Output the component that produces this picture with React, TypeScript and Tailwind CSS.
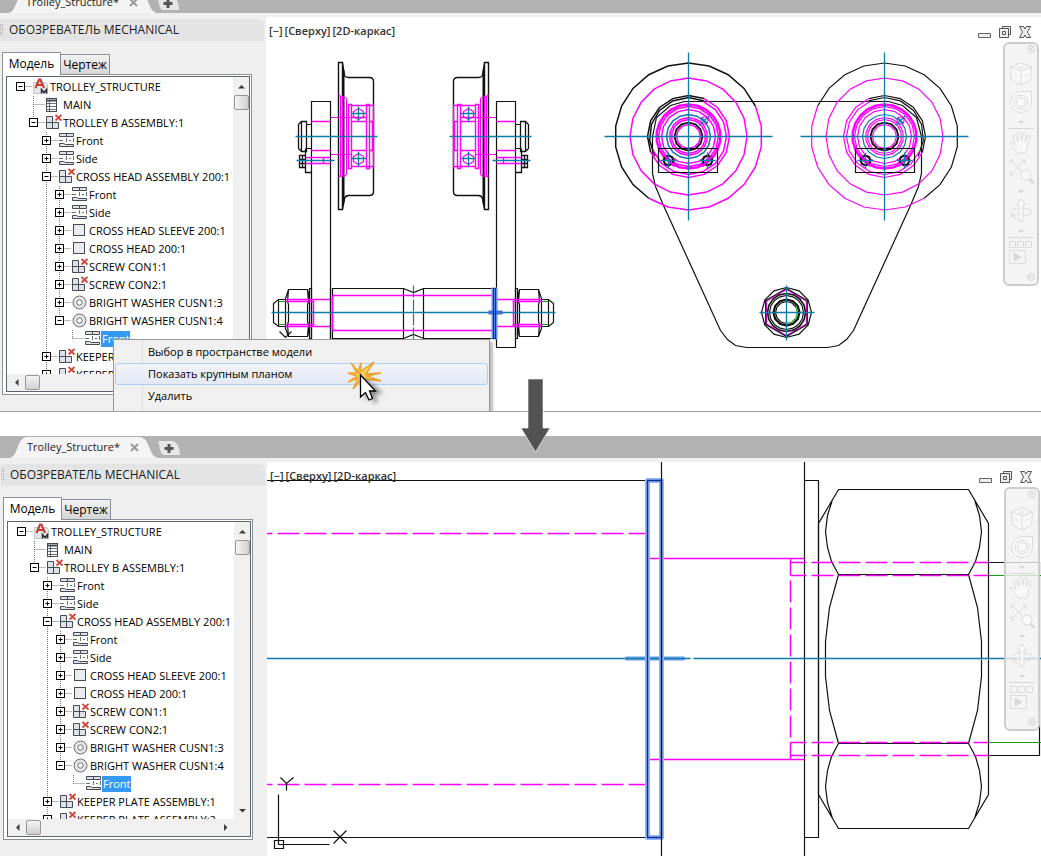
import clsx from "clsx";
import { ReactNode } from "react";

type IconName = "drawing" | "sheet" | "assembly" | "view" | "part" | "washer";

interface TreeNode {
	label: string;
	icon: IconName;
	depth: number;
	state?: "open" | "closed";
	// depths whose dotted line runs through the whole row
	through?: number[];
	// the row's own line stops at its middle
	last?: boolean;
	selected?: boolean;
}

const BLACK = "#111";
const MAGENTA = "#ff00ff";
const CYAN = "#0e7aa8";
const GREEN = "#12a012";
const INK = "#454a55";

const nodes: TreeNode[] = [
	{ label: "TROLLEY_STRUCTURE", icon: "drawing", depth: 0, state: "open" },
	{ label: "MAIN", icon: "sheet", depth: 1 },
	{ label: "TROLLEY B ASSEMBLY:1", icon: "assembly", depth: 1, state: "open", last: true },
	{ label: "Front", icon: "view", depth: 2, state: "closed" },
	{ label: "Side", icon: "view", depth: 2, state: "closed" },
	{ label: "CROSS HEAD ASSEMBLY 200:1", icon: "assembly", depth: 2, state: "open" },
	{ label: "Front", icon: "view", depth: 3, state: "closed", through: [2] },
	{ label: "Side", icon: "view", depth: 3, state: "closed", through: [2] },
	{ label: "CROSS HEAD SLEEVE 200:1", icon: "part", depth: 3, state: "closed", through: [2] },
	{ label: "CROSS HEAD 200:1", icon: "part", depth: 3, state: "closed", through: [2] },
	{ label: "SCREW CON1:1", icon: "assembly", depth: 3, state: "closed", through: [2] },
	{ label: "SCREW CON2:1", icon: "assembly", depth: 3, state: "closed", through: [2] },
	{ label: "BRIGHT WASHER CUSN1:3", icon: "washer", depth: 3, state: "closed", through: [2] },
	{ label: "BRIGHT WASHER CUSN1:4", icon: "washer", depth: 3, state: "open", through: [2], last: true },
	{ label: "Front", icon: "view", depth: 4, through: [2], last: true, selected: true },
	{ label: "KEEPER PLATE ASSEMBLY:1", icon: "assembly", depth: 2, state: "closed" },
	{ label: "KEEPER PLATE ASSEMBLY:2", icon: "assembly", depth: 2, state: "closed" },
];

function NodeIcon({ name }: { name: IconName }) {
	return (
		<svg width="16" height="18" viewBox="0 0 16 18" className="shrink-0" fill="none" stroke={INK}>
			{name === "drawing" && (
				<>
					<path d="M.5 4.500h12l2 2v9H.5z" fill="#e4e6ea" stroke="#c3c6cc" />
					<path d="M2.500 10 6 1.500h1.500L11 10M4 7h6" stroke="#c43a2f" strokeWidth="2" />
					<path d="M8.500 15.500v-4l2.500 3 2.500-3v4" stroke="#2b2f36" strokeWidth="1.500" />
				</>
			)}
			{name === "sheet" && (
				<>
					<rect x=".5" y="2.500" width="10" height="13" fill="#fff" />
					<path d="M1 4.500h9" strokeWidth="2" />
					<path d="M1 7.500h9M1 10.500h9M1 13.500h9M3.500 4v11" strokeWidth=".8" />
				</>
			)}
			{name === "assembly" && (
				<>
					<path d="M.5 2.500h6v6h-6zM.5 8.500h6v6h-6zM6.500 8.500h6v6h-6z" fill="#dfe2e8" />
					<path d="m9.500 1 6 5.500M15.500 1l-6 5.500" stroke="#d5453a" strokeWidth="1.800" />
				</>
			)}
			{name === "view" && (
				<>
					<path d="M.5 1.500h14v3H.5zM7.500 1.500v3" fill="#dfe2e8" />
					<path d="M.5 11.500h4l2 1h8v2H.5z" fill="#dfe2e8" />
					<path d="M0 8.500h4M7.500 6v4M14.500 6v4M10 8.500h2" strokeWidth=".8" />
				</>
			)}
			{name === "part" && <rect x="1.500" y="2.500" width="11" height="11" fill="#e9ebf0" />}
			{name === "washer" && (
				<>
					<circle cx="7.500" cy="8.500" r="6.500" fill="#e4e4e6" stroke="#6d6f75" />
					<circle cx="7.500" cy="8.500" r="2.700" fill="#fff" stroke="#6d6f75" />
				</>
			)}
		</svg>
	);
}

function Row({ node }: { node: TreeNode }) {
	const { depth, state, through = [], last, selected } = node;
	const x = depth * 13 + 6.5;
	return (
		<li role="treeitem" aria-selected={!!selected} className="flex h-[18px] items-center whitespace-nowrap">
			<svg
				width={depth * 13 + 19}
				height="18"
				className="shrink-0"
				stroke="#777"
				strokeDasharray="1 1"
				fill="none"
			>
				{through.map((d) => (
					<path key={d} d={`M${d * 13 + 6.5} 0v18`} />
				))}
				{depth > 0 && <path d={`M${x} 0v${last ? 9 : 18}`} />}
				<path d={`M${x} 8.500h12`} />
				{state === "open" && <path d={`M${x + 13} 14v4`} />}
				{state && (
					<g stroke="#000" strokeDasharray="none">
						<rect x={x - 4} y="4.500" width="8" height="8" fill="#fff" />
						<path d={`M${x - 2} 8.500h4`} />
						{state === "closed" && <path d={`M${x} 6.500v4`} />}
					</g>
				)}
			</svg>
			<NodeIcon name={node.icon} />
			<span className={clsx("px-px leading-4", selected && "bg-[#3399f3] text-white")}>{node.label}</span>
		</li>
	);
}

function Chevron({ d }: { d: string }) {
	return (
		<svg width="9" height="9" viewBox="0 0 9 9" fill="#3c3c3c">
			<path d={d} />
		</svg>
	);
}

function Browser() {
	return (
		<aside className="w-[266px] shrink-0 bg-[#efefef] pb-4">
			<h2 className="mt-[2px] mr-[2px] flex h-[22px] items-center gap-[6px] rounded-tr-md bg-[#e4e4e4] text-[12px] text-[#1c1c1c]">
				<svg width="3" height="12" stroke="#aaa" strokeDasharray="1 1">
					<path d="M.5 0v12M2.500 0v12" />
				</svg>
				ОБОЗРЕВАТЕЛЬ MECHANICAL
			</h2>
			<div className="mt-[11px] ml-[2px] w-[250px]">
				<div role="tablist" className="flex items-end text-[12px]">
					<button
						role="tab"
						aria-selected="true"
						className="relative -mb-px h-[23px] w-[59px] border border-b-0 border-[#8b8f98] bg-white"
					>
						Модель
					</button>
					<button
						role="tab"
						aria-selected="false"
						className="h-5 w-[49px] border border-b-0 border-l-0 border-[#8b8f98] bg-gradient-to-b from-[#f2f2f2] to-[#d6d6d6]"
					>
						Чертеж
					</button>
				</div>
				<div className="border border-[#8b8f98] bg-white pt-px pr-px pb-[2px] pl-[3px]">
					<div className="border border-[#5f636b]">
						<div className="flex h-[297px]">
							<ul role="tree" className="flex-1 overflow-hidden pt-px pl-[7px] text-[11px] text-black">
								{nodes.map((node, i) => (
									<Row key={i} node={node} />
								))}
							</ul>
							<div className="flex w-4 flex-col items-center bg-[#f0f0f0]">
								<button aria-label="Вверх" className="flex h-[18px] items-center">
									<Chevron d="M1 6.500 4.500 3 8 6.500z" />
								</button>
								<div className="h-[15px] w-[15px] rounded-[2px] border border-[#989898] bg-gradient-to-r from-[#f5f5f5] to-[#cfcfcf]" />
								<button aria-label="Вниз" className="mt-auto flex h-[18px] items-center">
									<Chevron d="M1 3 4.500 6.500 8 3z" />
								</button>
							</div>
						</div>
						<div className="flex h-[17px] items-center bg-[#f0f0f0] pr-4">
							<button aria-label="Влево" className="flex w-[18px] justify-center">
								<Chevron d="M6.500 1 3 4.500 6.500 8z" />
							</button>
							<div className="h-[15px] w-[15px] rounded-[2px] border border-[#989898] bg-gradient-to-b from-[#f5f5f5] to-[#cfcfcf]" />
							<button aria-label="Вправо" className="ml-auto flex w-[18px] justify-center">
								<Chevron d="M3 1 6.500 4.500 3 8z" />
							</button>
						</div>
					</div>
				</div>
			</div>
		</aside>
	);
}

function DocumentTabs() {
	return (
		<div className="relative h-[22px] bg-[#b2b2b2]">
			<svg width="200" height="22" className="absolute">
				<path d="M0 22h8c9 0 8-21 18-21h112c12 0 9 21 20 21z" fill="#f4f4f4" />
				<path d="M157 5h14c4 0 8 5 8 14h-16c-4 0-4-9-6-14z" fill="#e6e6e6" />
				<path d="M168 8v9M163.500 12.500h9" stroke="#555" strokeWidth="3" />
			</svg>
			<div className="relative flex h-[22px] items-center pt-px pl-[26px] text-[11px] text-[#222]">
				<a href="#" className="w-[100px]">
					Trolley_Structure*
				</a>
				<button aria-label="Закрыть" className="ml-[3px]">
					<svg width="9" height="9" stroke="#999" strokeWidth="2">
						<path d="m1 1 7 7m0-7L1 8" />
					</svg>
				</button>
			</div>
		</div>
	);
}

function NavButton({ label, children }: { label: string; children: ReactNode }) {
	return (
		<button aria-label={label} className="h-7 w-7">
			<svg width="28" height="28" viewBox="0 0 28 28" fill="none" stroke="#dcdcdc">
				{children}
			</svg>
		</button>
	);
}

function NavMore() {
	return (
		<button aria-label="Ещё" className="flex h-3 items-center">
			<svg width="6" height="3" fill="#d4d4d4">
				<path d="M0 0h6L3 3z" />
			</svg>
		</button>
	);
}

function NavigationBar() {
	return (
		<nav className="flex w-9 flex-col items-center rounded-[6px] border-2 border-[#cdcdcd] bg-[#f1f1f2]/80">
			<button aria-label="Закрыть панель" className="mb-1 h-3 self-end">
				<svg width="12" height="12" fill="none" stroke="#d4d4d4">
					<circle cx="6" cy="5" r="3.500" />
					<path d="m4.500 3.500 3 3m0-3-3 3" />
				</svg>
			</button>
			<NavButton label="Видовой куб">
				<path d="m14 3 10.500 4-1 13L14 25 4.500 20l-1-13zM3.500 7 14 11l10.500-4M14 11v14" fill="#f8f8f8" />
				<path d="M11 7h5M7 14l3 1.500M18 15.500l3-1.500" />
			</NavButton>
			<NavButton label="Штурвал">
				<path d="M14 3.500h10.500V14A10.500 10.500 0 1 1 14 3.500z" fill="#f8f8f8" />
				<circle cx="14" cy="14" r="7" />
				<circle cx="14" cy="14" r="4.500" />
			</NavButton>
			<NavMore />
			<hr className="w-[26px] border-[#d8d8d8]" />
			<NavButton label="Панорамирование">
				<path
					d="M10 24c-1-4-6-7-7-10 1-2 3-1 5 2L6 7c1-2 2.500-1 3 1l2 5V4c1-2 2.500-2 3 0l.5 8 2-8c1-1.500 2.500-1 2.500 1l-1 8 3-6c1-1 2.500 0 2 1.500L20 18c0 3-1 4-1 6z"
					fill="#f8f8f8"
				/>
			</NavButton>
			<NavButton label="Показать границы">
				<path d="m3 3 15 15M18 3 3 18M3 7V3h4M14 3h4v4M3 14v4h4" />
				<circle cx="19" cy="18" r="5" fill="#f8f8f8" />
				<path d="m22.500 22 4 4" strokeWidth="3" />
			</NavButton>
			<NavMore />
			<NavButton label="Орбита">
				<path d="M12 24V8H9.500L14 2l4.500 6H16v16z" fill="#f8f8f8" />
				<path d="M12 11c-12 1-10 7-3 8m7-8c12 1 10 7 1 8M8 15.500 4 18.500l5 3" />
			</NavButton>
			<NavMore />
			<hr className="w-[26px] border-[#d8d8d8]" />
			<NavButton label="Аниматор движения">
				<path d="M2.500 3.500h6v6h-6zM10.500 3.500h6v6h-6zM18.500 3.500h6v6h-6zM2.500 12.500h16v13h-16z" />
				<path d="m7 15 7 4-7 4z" fill="#d5d5d5" />
			</NavButton>
			<button aria-label="Настройка" className="mt-[6px] h-3 self-end">
				<svg width="12" height="12" fill="none" stroke="#d4d4d4">
					<circle cx="6" cy="5" r="3.500" />
					<path d="M4 4h4M4 6h4" />
				</svg>
			</button>
		</nav>
	);
}

function Viewport({ children, className }: { children: ReactNode; className?: string }) {
	return (
		<main className="relative min-w-0 flex-1 bg-white">
			<svg className="absolute inset-0 h-full w-full" fill="none" stroke={BLACK} strokeWidth="1.200">
				{children}
			</svg>
			<div className={clsx("absolute inset-x-0 top-[7px] flex items-start justify-between pl-[3px]", className)}>
				<div className="flex gap-[2px] text-[11px] leading-[14px] font-semibold text-[#333]">
					<button>[−]</button>
					<button>[Сверху]</button>
					<button>[2D-каркас]</button>
				</div>
				<div className="flex flex-col items-end gap-[2px]">
					<div className="flex h-4 items-center gap-2 pr-2">
						<button aria-label="Свернуть">
							<svg width="13" height="14" fill="#eee" stroke="#666">
								<path d="M.5 8.500h12v4H.5z" />
							</svg>
						</button>
						<button aria-label="Восстановить">
							<svg width="12" height="14" fill="#eee" stroke="#555">
								<path d="M3.500 1.500h8v8h-8z" />
								<path d="M.5 3.500h9v9h-9z" />
								<path d="M3.500 6.500h3v3h-3z" />
							</svg>
						</button>
						<button aria-label="Закрыть окно">
							<svg width="12" height="14" fill="#eee" stroke="#555">
								<path d="M.5 1.500h4L6 4l1.500-2.500h4L8.500 7l3 5.500h-4L6 10l-1.500 2.500h-4l3-5.500z" />
							</svg>
						</button>
					</div>
					<NavigationBar />
				</div>
			</div>
		</main>
	);
}

// vertices of an n-gon from index a to b, clockwise from the top
function ring(cx: number, cy: number, r: number, n: number, a = 0, b = n) {
	const pts: string[] = [];
	for (let i = a; i <= b; i++) {
		const t = (i * 2 * Math.PI) / n;
		pts.push(`${(cx + r * Math.sin(t)).toFixed(1)},${(cy - r * Math.cos(t)).toFixed(1)}`);
	}
	return pts.join(" ");
}

function WheelSection() {
	return (
		<g>
			<path d="M311 347V101h19v246zM330 117h9M330 154h9M306 124h5M306 148h5" />
			<path
				d="M306 121h-5l-3 3v24l3 3h5zM301 121v30M305 148v24h6M299 155h6v12h-6zM299 159h6M299 163h6M302 155v12"
				strokeWidth="1.300"
			/>
			<path
				d="M338 62h4v147h-4zM342 62l2 13q1 2 4 2h21q4 0 4 4v110q0 4-4 4h-21q-3 0-4 3l-2 11"
				strokeWidth="1.400"
			/>
			<path d="M343 70v132" strokeWidth="2" />
			<g stroke={MAGENTA}>
				<path d="M311 121h19M311 150h19M305 157h25M305 163h25M323 157v6" strokeWidth="1.500" />
				<path d="M338 94l2 2v79l-2 2M342 96v79M340 96q6 0 6 3v74q0 3-6 3M331 117h32M331 154h20" />
				<path
					d="M348 104h3v64h-3zM366 104h3v64h-3zM351 105h22v61h-22M351 121h15M351 150h15M351 117h15M369 121h3v29h-3"
					strokeWidth="1.400"
				/>
				<path d="M358 108l5 3v5l-5 3-5-3v-5zM358 153l5 3v5l-5 3-5-3v-5z" />
			</g>
			<path
				d="M295 136h82M296 160h38M351 113h15M358 106v15M351 158h15M358 151v15"
				stroke={CYAN}
				strokeWidth="1.300"
			/>
		</g>
	);
}

function NutSection() {
	return (
		<g>
			<path d="M288 289h19l2 9v30l-2 8h-19l-3-8v-30zM288 289l-1 12 1 3v17l-1 3 1 12M307 289l1 12-1 3v17l1 3-1 12M309 288h2v50h-2zM286 299h-8l-5 4v19l5 4h8M278 299v27" />
			<path d="M278 301h8M278 324h8" stroke={GREEN} />
			<path d="M285 299h46M285 301h28M285 324h28M285 326h46M313 300v26" stroke={MAGENTA} strokeWidth="1.500" />
		</g>
	);
}

function WheelFront({ width }: { width: number }) {
	return (
		<g strokeWidth={width}>
			<polyline points={ring(688, 136, 73.5, 22, -9, 4)} />
			<polyline points={ring(688, 136, 73.5, 22, 4, 13)} stroke={MAGENTA} />
			<polyline points={ring(688, 136, 41, 16, -5, 1)} />
			<polyline points={ring(688, 136, 39, 15, -5, 1)} />
			<g stroke={MAGENTA}>
				<polyline points={ring(688, 136, 58.5, 20)} />
				<polyline points={ring(688, 136, 41, 16, 1, 11)} />
				<polyline points={ring(688, 136, 38, 16, 1, 11)} />
				<polyline points={ring(688, 136, 32, 22)} strokeWidth="2.500" />
				<polyline points={ring(688, 136, 30, 16)} />
				<polyline points={ring(688, 136, 27, 16)} />
				<polyline points={ring(688, 136, 19, 14)} />
				<polyline points={ring(688, 136, 17, 14)} />
			</g>
			<polyline points={ring(688, 136, 22, 16)} stroke={CYAN} />
			<polyline points={ring(688, 136, 14, 12)} strokeWidth="1.800" />
			<polyline points={ring(688, 136, 12, 12)} stroke={MAGENTA} />
			<path d="M658 148h59v24h-59z" strokeWidth="1.200" />
			<polyline points={ring(668, 160, 5, 8)} strokeWidth="2" />
			<polyline points={ring(707, 160, 5, 8)} strokeWidth="2" />
			<path d="M664 155l10 11M702 166l10-11" stroke={MAGENTA} strokeWidth={width * 1.3} />
			<path d="M660 160h16M668 152v16M699 160h16M707 152v16" stroke={CYAN} strokeWidth="1.300" />
			<path d="M604 136h168M688 52v168" stroke={CYAN} strokeWidth="1.300" />
		</g>
	);
}

function Grease({ x }: { x: number }) {
	return (
		<g>
			<circle cx={x} cy="120" r="3.500" stroke={MAGENTA} />
			<path d={`M${x - 5} 125l10-10M${x - 3} 117l6 6`} stroke={CYAN} />
		</g>
	);
}

function TrolleyDrawing() {
	return (
		<g transform="translate(-265.500 -16.500)">
			<WheelSection />
			<g transform="matrix(-1 0 0 1 826 0)">
				<WheelSection />
				<NutSection />
			</g>
			<NutSection />
			<path d="M332 338v-50h71l10 4 10-4h70v50h-70l-10-4-10 4zM403 288v50M423 288v50M330 288v50" />
			<path d="M332 295h161M332 330h161M332 295v35" stroke={MAGENTA} strokeWidth="1.500" />
			<path d="M271 312h284" stroke={CYAN} strokeWidth="1.300" />
			<path d="M413 285v56" stroke={CYAN} strokeDasharray="12 2" />
			<path d="M494 287v52" stroke="#6f9cf5" strokeWidth="6" />
			<path d="M488 312h14" stroke="#3a6fd8" strokeWidth="4" />
			<path d="M493 288h2v50h-2z" stroke="#0c2f9c" />
			<path d="m279 331 6 6 6-6" />
			<path d="M652 136v37l3 13 8 19 57 125 7 9 8 6 11 2h81l11-2 8-6 7-9 57-125 8-19 3-13v-37l-5-19-14-12-14-4H684l-14 4-14 12z" />
			<WheelFront width={1.500} />
			<g transform="matrix(-1 0 0 1 1572 0)">
				<WheelFront width={1.200} />
			</g>
			<Grease x={704} />
			<Grease x={900} />
			<g>
				<polyline points={ring(786, 312, 25, 12)} />
				<polyline points={ring(786, 312, 23, 6)} stroke={MAGENTA} />
				<polyline points={ring(786, 312, 24, 6)} />
				<polyline points={ring(786, 312, 19, 16)} strokeWidth="1.600" />
				<polyline points={ring(786, 312, 17, 16)} />
				<polyline points={ring(786, 312, 13, 12)} strokeWidth="2.200" />
				<polyline points={ring(786, 312, 11, 12, 2, 6)} stroke={GREEN} />
				<polyline points={ring(786, 312, 11, 12, 6, 14)} />
				<path d="M759 312h55M786 285v55" stroke={CYAN} strokeWidth="1.300" />
			</g>
		</g>
	);
}

function HalfNut() {
	return <path d="M904 489h-66l-20 34v135M832 499l-5 16-2 16 2 16 4 14 7 13h66M838 574l-9 33-4 34v17" />;
}

function CloseUpDrawing() {
	return (
		<g transform="translate(-266.500 -461.500)" strokeWidth="1.200">
			<path d="M266 480h381M266 837h381M804 460v400M804 480h14v357h-14M988 562h51v193h-51" />
			<HalfNut />
			<g transform="matrix(-1 0 0 1 1806 0)">
				<HalfNut />
			</g>
			<g transform="matrix(1 0 0 -1 0 1317)">
				<HalfNut />
				<g transform="matrix(-1 0 0 1 1806 0)">
					<HalfNut />
				</g>
			</g>
			<path d="M988 575h54M988 742h54" stroke={GREEN} />
			<g stroke={MAGENTA} strokeDasharray="22 5" strokeWidth="1.500">
				<path d="M266 533h381M266 784h381" strokeDashoffset="16" />
				<path d="M790 562h198M790 575h198M790 742h198M790 755h198" strokeDashoffset="6" />
				<path d="M790 558v201" strokeDashoffset="5" />
				<path d="M647 558h157M647 759h157" strokeDasharray="none" />
			</g>
			<path d="M266 658h776" stroke={CYAN} strokeDasharray="424 3 360" strokeWidth="1.300" />
			<path d="M626 658h57" stroke="#5f9ae0" strokeWidth="4" strokeLinecap="round" />
			<path d="M625 658h59" stroke={CYAN} />
			<path d="M647 480h14v357h-14z" stroke="#8fb4fa" strokeWidth="5" strokeLinejoin="round" />
			<path d="M647 480h14v357h-14z" stroke="#0b2f8f" strokeWidth="1.400" />
			<path d="M661 460v400" />
			<path d="M278 794v50h51M274 840h9v8h-9zM333 830l13 13M346 830l-13 13M280 777l6 6 7-6M286 783v7" />
		</g>
	);
}

function ContextMenu() {
	return (
		<div
			role="menu"
			className="absolute top-[339px] left-[113px] w-[377px] border border-[#979797] bg-[#f0f0f0] p-px pb-3 text-[11px] text-black shadow-[3px_3px_2px_#8888]"
		>
			<div className="absolute inset-y-0 left-[28px] w-px bg-[#dcdcdc]" />
			<button role="menuitem" className="relative flex h-[22px] w-full items-center pl-[33px]">
				Выбор в пространстве модели
			</button>
			<button
				role="menuitem"
				className="relative flex h-[22px] w-full items-center rounded-[3px] border border-[#aecff7] bg-gradient-to-b from-[#f1f3f8] to-[#e3e9f5] pl-8"
			>
				Показать крупным планом
			</button>
			<button role="menuitem" className="relative flex h-[22px] w-full items-center pl-[33px]">
				Удалить
			</button>
		</div>
	);
}

function ClickPointer() {
	return (
		<svg width="44" height="48" className="absolute top-[358px] left-[345px]">
			<path
				d="M16 17 6 5l6 10L3 15l9 3-9 6 10-4-5 11 8-9 3 10 0-11 17 2-14-5 14-3-15 1 8-12L16 13l0-8-3 8z"
				fill="#f3cf5a"
				stroke="#eda22e"
				strokeWidth="1.400"
			/>
			<path d="M20 20v22l6-4 3 7 4-1-3-7 8-2z" fill="#0006" className="blur-[2px]" />
			<path d="M15.500 17v22l5-4.500 3.500 7.500 3.500-1.500-3-7.500h6z" fill="#fff" stroke="#000" strokeWidth="1.300" />
		</svg>
	);
}

export default function App() {
	return (
		<div className="relative bg-white font-['Open_Sans','Noto_Sans',sans-serif]">
			<section className="relative overflow-hidden border-b border-[#a0a0a0]">
				<div className="-mt-[9px]">
					<DocumentTabs />
					<div className="h-1 bg-[#efefef]" />
					<div className="flex">
						<Browser />
						<Viewport className="pr-[2px]">
							<TrolleyDrawing />
						</Viewport>
					</div>
				</div>
				<ContextMenu />
				<ClickPointer />
			</section>
			<svg width="34" height="76" className="absolute top-[378px] left-[519px] z-10">
				<path d="M9 1h15v49h7L16.500 74 2 50h7z" fill="#525252" stroke="#fff" strokeWidth=".6" />
			</svg>
			<section className="mt-6 bg-[#efefef]">
				<div className="bg-[#b2b2b2] pl-px">
					<DocumentTabs />
				</div>
				<div className="h-1 bg-[#efefef]" />
				<div className="flex pl-px">
					<Browser />
					<Viewport className="pr-px">
						<CloseUpDrawing />
					</Viewport>
				</div>
			</section>
		</div>
	);
}
